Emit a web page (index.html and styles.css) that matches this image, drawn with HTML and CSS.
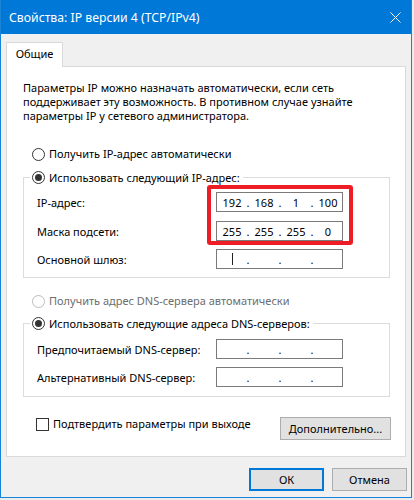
FILE: index.html
```html
<!DOCTYPE html>
<html lang="ru">
<head>
<meta charset="utf-8">
<title>Свойства: IP версии 4 (TCP/IPv4)</title>
<link rel="stylesheet" href="styles.css">
</head>
<body>
<div class="window">
  <div class="titlebar">
    <span class="title">Свойства: IP версии 4 (TCP/IPv4)</span>
    <svg class="close" width="11" height="11" viewBox="0 0 11 11" aria-hidden="true"><path d="M0.5 0.5L10.5 10.5M10.5 0.5L0.5 10.5" stroke="#fff" stroke-width="1" fill="none"/></svg>
  </div>
  <div class="client">
    <div class="tabs"><div class="tab">Общие</div></div>
    <div class="panel">
      <p class="intro">Параметры IP можно назначать автоматически, если сеть<br>поддерживает эту возможность. В противном случае узнайте<br>параметры IP у сетевого администратора.</p>

      <div class="radio-row option"><span class="radio"></span><span>Получить IP-адрес автоматически</span></div>

      <fieldset class="group group-ip">
        <legend class="radio-row"><span class="radio checked"></span><span>Использовать следующий IP-адрес:</span></legend>
        <div class="field-row">
          <span class="label">IP-адрес:</span>
          <div class="ipbox">
            <span class="highlight"></span>
            <span class="oct">192</span><span class="dot">.</span><span class="oct">168</span><span class="dot">.</span><span class="oct">1</span><span class="dot">.</span><span class="oct">100</span>
          </div>
        </div>
        <div class="field-row">
          <span class="label">Маска подсети:</span>
          <div class="ipbox">
            <span class="oct">255</span><span class="dot">.</span><span class="oct">255</span><span class="dot">.</span><span class="oct">255</span><span class="dot">.</span><span class="oct">0</span>
          </div>
        </div>
        <div class="field-row">
          <span class="label">Основной шлюз:</span>
          <div class="ipbox">
            <span class="oct"><span class="caret"></span></span><span class="dot">.</span><span class="oct"></span><span class="dot">.</span><span class="oct"></span><span class="dot">.</span><span class="oct"></span>
          </div>
        </div>
      </fieldset>

      <div class="radio-row option option-dns disabled"><span class="radio"></span><span>Получить адрес DNS-сервера автоматически</span></div>

      <fieldset class="group group-dns">
        <legend class="radio-row"><span class="radio checked"></span><span>Использовать следующие адреса DNS-серверов:</span></legend>
        <div class="field-row">
          <span class="label">Предпочитаемый DNS-сервер:</span>
          <div class="ipbox">
            <span class="oct"></span><span class="dot">.</span><span class="oct"></span><span class="dot">.</span><span class="oct"></span><span class="dot">.</span><span class="oct"></span>
          </div>
        </div>
        <div class="field-row">
          <span class="label">Альтернативный DNS-сервер:</span>
          <div class="ipbox">
            <span class="oct"></span><span class="dot">.</span><span class="oct"></span><span class="dot">.</span><span class="oct"></span><span class="dot">.</span><span class="oct"></span>
          </div>
        </div>
      </fieldset>

      <div class="bottom-row">
        <label class="check-row"><span class="checkbox"></span><span>Подтвердить параметры при выходе</span></label>
        <button class="btn btn-advanced" type="button">Дополнительно...</button>
      </div>
    </div>
    <div class="actions">
      <button class="btn btn-dialog btn-default" type="button">ОК</button>
      <button class="btn btn-dialog" type="button">Отмена</button>
    </div>
  </div>
</div>
</body>
</html>
```

FILE: styles.css
```css
* {
  box-sizing: border-box;
}

html,
body {
  margin: 0;
  padding: 0;
}

body {
  width: 414px;
  height: 500px;
  overflow: hidden;
  background: #ececec;
  font-family: "Noto Sans", "Open Sans", sans-serif;
  font-size: 11px;
  color: #000;
}

.window {
  width: 412px;
  height: 498px;
  border: 1px solid #1883d7;
  border-top: 0;
  background: #f0f0f0;
  display: flex;
  flex-direction: column;
}

.titlebar {
  flex: none;
  height: 34px;
  background: #0078d7;
  color: #fff;
  display: flex;
  align-items: center;
  justify-content: space-between;
  padding: 0 10px 0 8px;
  font-size: 12.25px;
}

.close {
  display: block;
}

.client {
  padding: 8px 5px 0;
}

.tabs {
  display: flex;
  height: 24px;
}

.tab {
  position: relative;
  z-index: 1;
  width: 57px;
  height: 25px;
  background: #fff;
  border: 1px solid #d9d9d9;
  border-bottom: 0;
  text-align: center;
  line-height: 22px;
}

.panel {
  height: 391px;
  background: #fff;
  border: 1px solid #d9d9d9;
}

.intro {
  margin: 14px 0 0 16px;
  line-height: 14px;
}

.radio-row {
  display: flex;
  align-items: center;
  gap: 4px;
  height: 16px;
  line-height: 16px;
  white-space: nowrap;
}

.option {
  margin: 23px 0 0 25px;
}

.option-dns {
  margin-top: 15px;
}

.disabled {
  color: #6d6d6d;
}

.disabled .radio {
  border-color: #bcbcbc;
}

.radio {
  flex: none;
  width: 13px;
  height: 13px;
  border: 1px solid #333;
  border-radius: 50%;
  background: #fff;
  display: flex;
  align-items: center;
  justify-content: center;
}

.radio.checked::after {
  content: "";
  width: 7px;
  height: 7px;
  border-radius: 50%;
  background: #333;
}

.group {
  margin: 7px 0 0 16px;
  width: 367px;
  min-width: 0;
  border: 1px solid #dcdcdc;
  padding: 6px 0 8px 0;
}

.group legend {
  height: 17px;
  margin-left: 6px;
  padding: 0 3px 0 2px;
}

.group-dns {
  margin-top: 6px;
  padding-top: 7px;
  padding-bottom: 9px;
}

.field-row {
  display: flex;
  align-items: center;
  margin-left: 13px;
  height: 20px;
}

.field-row + .field-row {
  margin-top: 8px;
}

.group-ip .field-row:nth-of-type(2) {
  margin-top: 9px;
}

.label {
  width: 179px;
  white-space: nowrap;
}

.ipbox {
  position: relative;
  width: 127px;
  height: 20px;
  border: 1px solid #7a7a7a;
  background: #fff;
  padding: 0 1px 0 2px;
  display: flex;
  align-items: center;
}

.oct {
  width: 26px;
  text-align: center;
  display: flex;
  align-items: center;
  justify-content: center;
}

.dot {
  width: 6px;
  text-align: center;
}

.caret {
  display: block;
  width: 1px;
  height: 12px;
  background: #222;
}

.highlight {
  position: absolute;
  top: -8px;
  left: -10px;
  width: 146px;
  height: 60px;
  border: 4px solid #ee1c25;
  border-radius: 3px;
  pointer-events: none;
}

.bottom-row {
  display: flex;
  justify-content: space-between;
  align-items: flex-start;
  margin: 20px 14px 0 29px;
}

.check-row {
  display: flex;
  align-items: flex-start;
  gap: 4px;
  line-height: 14px;
}

.checkbox {
  flex: none;
  width: 13px;
  height: 13px;
  margin-top: 1px;
  border: 1px solid #333;
  background: #fff;
}

.btn {
  font: inherit;
  color: #000;
  background: #e1e1e1;
  border: 1px solid #adadad;
  border-radius: 0;
  padding: 0;
  height: 23px;
  margin: 0;
}

.btn-advanced {
  width: 111px;
}

.actions {
  display: flex;
  justify-content: flex-end;
  gap: 8px;
  margin: 11px -1px 0 0;
}

.btn-dialog {
  width: 75px;
}

.btn-default {
  border-color: #0078d7;
  box-shadow: inset 0 0 0 1px #0078d7;
}
```
